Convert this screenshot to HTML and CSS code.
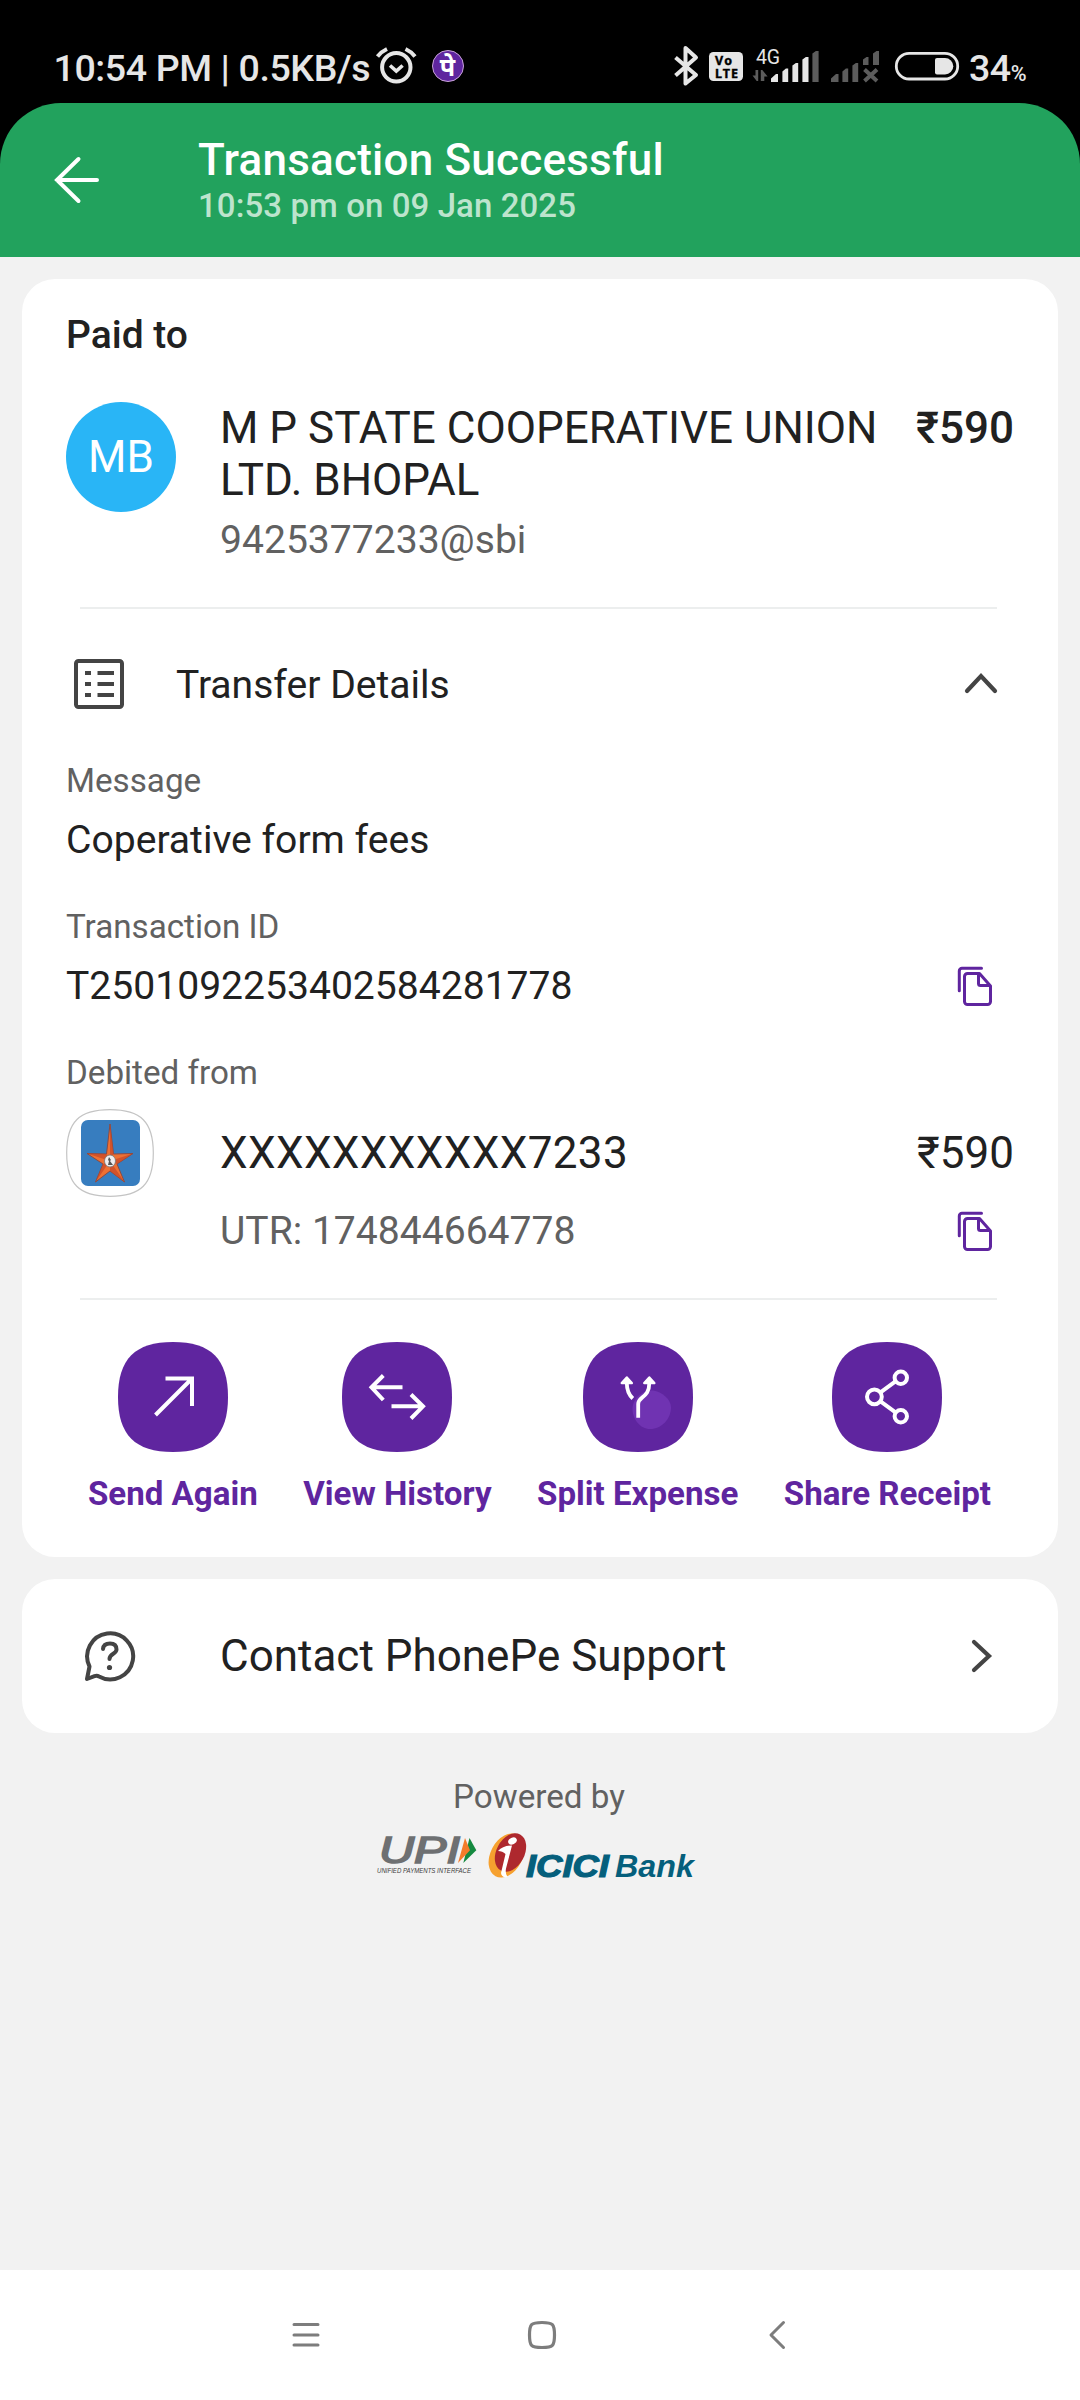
FILE: index.html
```html
<!DOCTYPE html>
<html lang="en">
<head>
<meta charset="utf-8">
<title>Transaction Successful</title>
<link rel="stylesheet" href="styles.css">
</head>
<body>
<div class="statusbar">
  <span class="clock">10:54 PM | 0.5KB/s</span>
  <svg class="alarm" width="42" height="38" viewBox="375 47 42 38" fill="none" stroke="#e6e6e6">
    <circle cx="396.3" cy="67.3" r="14.2" stroke-width="4"/>
    <path d="M390 65.5l6.3 5.5 6.3-5.5" stroke-width="3.6"/>
    <path d="M377.5 56.5q4-5 9.5-7.5M415 56.500q-4-5-9.500-7.500" stroke-width="4"/>
  </svg>
  <span class="pe">पे</span>
  <svg class="sys" width="290" height="42" viewBox="670 45 290 42">
    <path d="M675.500 57.500L696 75 685.500 83.500V48L696 57.500 675.500 75.500" fill="none" stroke="#e6e6e6" stroke-width="4" stroke-linejoin="round"/>
    <rect x="709" y="52" width="34" height="29" rx="4.500" fill="#e6e6e6"/>
    <text class="lte" x="715" y="64.500" textLength="17">Vo</text>
    <text class="lte" x="715" y="77.500" textLength="23">LTE</text>
    <text class="net" x="756" y="64" textLength="24">4G</text>
    <path d="M758.200 70v11h-1.500l-4.200-5.500h3V70zM760.800 81V70h1.500l5.300 6.500h-3.300V81z" fill="#5c5c5c"/>
    <path d="M771 82v-3.500l5-4.500h2v8zM782.400 82V71.500l3.500-3h2.300V82zM792.400 82V65.500l3.500-2.500h2.300v19zM802.400 82V59.500l3.500-2.500h2.600v25z" fill="#e6e6e6"/>
    <path d="M812.400 82V53.500l3.500-2.500h2.700v31zM831 82v-3.500l5-4.500h2.500v8zM842.400 82V71.500l3.500-3h2.300V82zM852.400 82V65.500l3.500-2.500h2.300v19zM863 65v-5.500l3.500-2.500h2v8zM873 65V53.500l3.500-2.500h2.500v14z" fill="#5c5c5c"/>
    <path d="M864.500 69.500l12.500 11.500M877 69.500l-12.500 11.500" stroke="#5c5c5c" stroke-width="4"/>
    <rect x="896.300" y="53.300" width="61.400" height="25.700" rx="12.850" fill="none" stroke="#e6e6e6" stroke-width="2.800"/>
    <path d="M937 58h8a8.200 8.200 0 0 1 0 16.500h-8a2 2 0 0 1-2-2V60a2 2 0 0 1 2-2z" fill="#e6e6e6"/>
  </svg>
  <span class="battery">34<small>%</small></span>
</div>
<header class="header">
  <svg class="back" width="46" height="50" viewBox="0 0 46 50" fill="none" stroke="#fff" stroke-width="4" stroke-linecap="round"><path d="M43 25H3M24.500 4L3 25l21.500 21"/></svg>
  <div>
    <h1 class="title">Transaction Successful</h1>
    <p class="when">10:53 pm on 09 Jan 2025</p>
  </div>
</header>
<main class="content">
  <section class="card receipt">
    <h2 class="paid">Paid to</h2>
    <div class="payee">
      <div class="avatar">MB</div>
      <div class="who">
        <p class="name">M P STATE COOPERATIVE UNION<br>LTD. BHOPAL</p>
        <p class="sub vpa">9425377233@sbi</p>
      </div>
      <p class="amount strong">₹590</p>
    </div>
    <hr class="rule">
    <div class="fold">
      <svg class="list" width="50" height="50" viewBox="0 0 50 50" fill="none" stroke="#444" stroke-width="4"><rect x="2" y="2" width="46" height="46" rx="2.500"/><path d="M11 14h6M23.500 14H40M11 25h6M23.500 25H40M11 36h6M23.500 36H40"/></svg>
      <span>Transfer Details</span>
      <svg class="up" width="34" height="22" viewBox="0 0 34 22" fill="none" stroke="#444" stroke-width="4.200" stroke-linecap="round"><path d="M3 19L17 4l14 15"/></svg>
    </div>
    <p class="label">Message</p>
    <p class="value">Coperative form fees</p>
    <p class="label">Transaction ID</p>
    <div class="value copyrow"><span>T2501092253402584281778</span>
      <svg class="copy" width="40" height="46" viewBox="954 963 40 46" fill="none" stroke="#5f259f" stroke-width="3" stroke-linecap="round" stroke-linejoin="round"><path d="M959.300 990.700V971a2.700 2.700 0 0 1 2.700-2.700h19.500M967.500 973.500h12l11 12.500v15.500a3 3 0 0 1-3 3h-20a3 3 0 0 1-3-3v-25a3 3 0 0 1 3-3zM978.500 974v9.500a2 2 0 0 0 2 2h9.500"/></svg>
    </div>
    <p class="label">Debited from</p>
    <div class="account">
      <svg class="bank" width="88" height="88" viewBox="0 0 88 88">
        <path d="M.7 44C.7 13 13 .7 44 .7S87.300 13 87.300 44 75 87.300 44 87.300.7 75 .7 44z" fill="#fff" stroke="#c4c4c4" stroke-width="1.200"/>
        <rect x="15" y="11" width="59" height="66" rx="7" fill="#377dbf"/>
        <path d="M44 15l3.500 30 19.500-.5-16 10.500 7.500 18L44 62 29.500 73 37 55 21 44.500l19.500.5z" fill="#ee7032" stroke="#8b4a43" stroke-width="1"/>
        <path d="M44 15v37l3.500-7zM67 44.500L44 52l7 3zM58.500 73L44 52v10zM29.500 73L44 52l-7 3zM21 44.500L44 52l-3.500-7z" fill="#c84a28" opacity=".75"/>
        <ellipse cx="44" cy="52" rx="5.500" ry="6" fill="#f0eeee" stroke="#777" stroke-width=".8"/>
        <path d="M43 48l2 3-1 1 3 4h-5l1-4-1-1z" fill="#555"/>
      </svg>
      <span class="number">XXXXXXXXXXX7233</span>
      <span class="amount">₹590</span>
    </div>
    <div class="utr copyrow"><span class="sub">UTR: 174844664778</span>
      <svg class="copy" width="40" height="46" viewBox="954 963 40 46" fill="none" stroke="#5f259f" stroke-width="3" stroke-linecap="round" stroke-linejoin="round"><path d="M959.300 990.700V971a2.700 2.700 0 0 1 2.700-2.700h19.500M967.500 973.500h12l11 12.500v15.500a3 3 0 0 1-3 3h-20a3 3 0 0 1-3-3v-25a3 3 0 0 1 3-3zM978.500 974v9.500a2 2 0 0 0 2 2h9.500"/></svg>
    </div>
    <hr class="rule">
    <div class="actions">
      <div class="action">
        <svg width="110" height="110" viewBox="0 0 110 110" fill="none" stroke="#fff" stroke-width="4"><path class="tile" d="M0 55C0 17 17 0 55 0S110 17 110 55 93 110 55 110 0 93 0 55z"/><path d="M37.500 73L74 36.500M47.500 36.500H74V64"/></svg>
        <span>Send Again</span>
      </div>
      <div class="action">
        <svg width="110" height="110" viewBox="0 0 110 110" fill="none" stroke="#fff" stroke-width="4"><path class="tile" d="M0 55C0 17 17 0 55 0S110 17 110 55 93 110 55 110 0 93 0 55z"/><path d="M60.500 45.300H30M41.300 33.500L29.500 45.300 41.300 58M49.500 64.300H80M69 52.500L81 64.300 69 76.500"/></svg>
        <span>View History</span>
      </div>
      <div class="action">
        <svg width="110" height="110" viewBox="0 0 110 110" fill="none" stroke="#fff" stroke-width="4"><path class="tile" d="M0 55C0 17 17 0 55 0S110 17 110 55 93 110 55 110 0 93 0 55z"/><path d="M70 48.500c9 1 18 9 18 17 0 11-9 21.500-21 21.500-10 0-17.500-10-17.500-20C49.500 56 60 47.500 70 48.500z" fill="#7033b2" stroke="none"/><path d="M43.800 41q0 10 6 15.500M66.300 41c0 15-11 13-11.100 21v13.700" stroke-width="3.800"/><path d="M43.800 35.500l5 5.500h-10zM66.300 35.500l5 5.500h-10z" fill="#fff" stroke-width="2.500" stroke-linejoin="round"/></svg>
        <span>Split Expense</span>
      </div>
      <div class="action">
        <svg width="110" height="110" viewBox="0 0 110 110" fill="none" stroke="#fff" stroke-width="4"><path class="tile" d="M0 55C0 17 17 0 55 0S110 17 110 55 93 110 55 110 0 93 0 55z"/><circle cx="42.400" cy="54.800" r="7.400"/><circle cx="68.800" cy="35.700" r="6.200"/><circle cx="68.800" cy="74.200" r="6.200"/><path d="M48.500 50.300l15-11M48.500 59.300l15 11"/></svg>
        <span>Share Receipt</span>
      </div>
    </div>
  </section>
  <section class="card support">
    <svg width="52" height="52" viewBox="84 1630 52 52" fill="none" stroke="#444" stroke-width="4" stroke-linecap="round" stroke-linejoin="round"><path d="M87 1679l2.500-12.500a23 23 0 1 1 9.500 10q-2-1.200-4.500-.3z"/><path d="M103 1649q.5-5.500 7-5.500t6.500 6c0 4.500-7 4-7 9.500"/><circle cx="109.500" cy="1667.500" r="2.600" fill="#444" stroke="none"/></svg>
    <span>Contact PhonePe Support</span>
    <svg class="next" width="24" height="38" viewBox="0 0 24 38" fill="none" stroke="#444" stroke-width="4.200" stroke-linecap="round"><path d="M4 5l15 14L4 33"/></svg>
  </section>
  <footer class="powered">
    <p>Powered by</p>
    <svg width="324" height="50" viewBox="376 1830 324 50">
      <text class="upi" x="380" y="1862" textLength="81" lengthAdjust="spacingAndGlyphs">UPI</text>
      <path d="M470.500 1837l6.800 12.300-13 12.700z" fill="#14893f"/>
      <path d="M466 1837l5 12.300-12 12.700z" fill="#f47b2a"/>
      <text class="tag" x="378" y="1871.500" textLength="94" lengthAdjust="spacingAndGlyphs">UNIFIED PAYMENTS INTERFACE</text>
      <ellipse cx="507.500" cy="1854.500" rx="16" ry="23.500" transform="rotate(28 507.500 1854.500)" fill="#f6a12f"/>
      <ellipse cx="511.500" cy="1851.500" rx="14" ry="20.500" transform="rotate(28 511.500 1851.500)" fill="#ae282e"/>
      <ellipse cx="513.500" cy="1840" rx="4.500" ry="3.200" transform="rotate(-25 513.500 1840)" fill="#fff"/>
      <path d="M499 1850q5-5.500 14-5.500l-6 23q-1 5 1.500 8.500-6 1-6.500-4l4.500-19q-3-3-7.500-3z" fill="#fff"/>
      <text class="icici" x="527" y="1875.500" textLength="83" lengthAdjust="spacingAndGlyphs">ICICI</text>
      <text class="bankname" x="616" y="1875.500" textLength="79" lengthAdjust="spacingAndGlyphs">Bank</text>
    </svg>
  </footer>
</main>
<nav class="nav">
  <svg width="30" height="30" viewBox="0 0 30 30" fill="none" stroke="#7d7d7d" stroke-width="3" stroke-linecap="round"><path d="M3 4.500h24M3 15h24M3 25h24"/></svg>
  <svg width="30" height="30" viewBox="0 0 30 30" fill="none" stroke="#7d7d7d" stroke-width="3.200"><path d="M2.500 15C2.500 4 4 2.500 15 2.500S27.500 4 27.500 15 26 27.500 15 27.500 2.500 26 2.500 15z"/></svg>
  <svg width="30" height="30" viewBox="0 0 30 30" fill="none" stroke="#7d7d7d" stroke-width="3" stroke-linecap="round" stroke-linejoin="round"><path d="M21.500 2.500L9 15l12.500 12.500"/></svg>
</nav>
</body>
</html>
```
FILE: styles.css
```css
* { box-sizing: border-box; margin: 0; padding: 0; }
body {
  width: 1080px;
  height: 2400px;
  display: flex;
  flex-direction: column;
  background: #000;
  font-family: Roboto, "Noto Sans", sans-serif;
  font-size: 39.1px;
  color: #212121;
  overflow: hidden;
}
svg { display: block; flex: none; }

.statusbar {
  height: 103px;
  padding: 44px 50px 0 53.5px;
  display: flex;
  align-items: flex-start;
  color: #e6e6e6;
}
.clock, .battery { font-weight: 500; font-size: 37.5px; line-height: 48px; white-space: nowrap; }
.clock { width: 318px; letter-spacing: -.38px; }
.alarm { margin: 3px 0 0 3px; }
.pe {
  width: 32px;
  height: 32px;
  margin: 6px 0 0 15px;
  border: 1px solid #c9a4d8;
  border-radius: 50%;
  background: #5f259f;
  color: #fff;
  font: bold 25px/31px "Noto Sans", sans-serif;
  text-align: center;
}
.sys { margin: 1px 0 0 auto; }
.lte { font: bold 12.5px "Noto Sans", sans-serif; fill: #000; stroke: #000; stroke-width: .4px; }
.net { font: 19.5px Roboto, sans-serif; fill: #e6e6e6; }
.battery { width: 61px; margin-left: 9px; letter-spacing: -.5px; }
.battery small { font-size: 21.5px; }

.header {
  height: 154px;
  padding: 30px 54px 0;
  display: flex;
  background: #22a25d;
  border-radius: 61px 61px 0 0;
  color: #fff;
}
.back { margin: 22px 98px 0 0; }
.title { font-size: 44px; font-weight: 500; line-height: 54px; letter-spacing: .22px; }
.when { font-size: 33px; font-weight: 500; line-height: 38px; letter-spacing: .08px; color: #bde4cd; }

.content {
  flex: 1;
  padding: 22px;
  display: flex;
  flex-direction: column;
  gap: 22px;
  background: #f2f2f2;
}
.card { background: #fff; border-radius: 33px; padding: 33px 44px; }
.receipt { height: 1278px; }
.paid { font-size: 39px; font-weight: 500; line-height: 46px; }
.payee { display: flex; margin-top: 44px; }
.avatar {
  width: 110px;
  height: 110px;
  margin-right: 44px;
  border-radius: 50%;
  background: #29b5f6;
  color: #fff;
  font-size: 44px;
  line-height: 110px;
  text-align: center;
}
.name { font-size: 44px; line-height: 52px; white-space: nowrap; }
.sub { color: #616161; line-height: 46px; }
.vpa { margin-top: 11px; }
.amount { margin-left: auto; font-size: 44px; line-height: 52px; }
.strong { font-weight: 500; }
.rule { height: 2px; margin: 44px 17px 0 14px; border: 0; background: #eceeee; }
.fold { display: flex; height: 52px; margin: 50px 16px 50px 8px; line-height: 52px; }
.fold span { margin-left: 52px; }
.up { margin: 13px 0 0 auto; }
.label { font-size: 33.2px; line-height: 40px; color: #616161; margin-bottom: 16px; }
.value { line-height: 46px; margin-bottom: 44px; }
.copyrow { display: flex; justify-content: space-between; padding-right: 20px; }
.copyrow .copy { margin-top: -.5px; }
.account { display: flex; align-items: center; height: 88px; font-size: 44px; }
.account .bank { margin-right: 66px; }
.number { letter-spacing: .38px; }
.utr { margin-top: 11px; padding-left: 154px; line-height: 46px; }
.actions {
  display: flex;
  justify-content: space-between;
  margin: 42px 23px 0 22px;
}
.action {
  display: flex;
  flex-direction: column;
  align-items: center;
  gap: 22px;
  font-size: 33.1px;
  line-height: 40px;
  font-weight: 700;
  color: #5f259f;
}
.tile { fill: #5f259f; stroke: none; }

.support {
  height: 154px;
  padding: 0 64px 0 62px;
  display: flex;
  align-items: center;
  font-size: 44px;
}
.support span { margin-left: 84px; }
.next { margin-left: auto; }

.powered {
  padding: 22px 2px 0 0;
  display: flex;
  flex-direction: column;
  align-items: center;
  gap: 14px;
  font-size: 33.2px;
  line-height: 40px;
  color: #616161;
}
.powered svg { margin-right: 4px; }
.upi { font: italic 500 36px "Liberation Sans", sans-serif; fill: #6e7072; stroke: #6e7072; stroke-width: 1.6px; }
.tag { font: italic 8px "Liberation Sans", sans-serif; fill: #3c3c3c; }
.icici { font: italic bold 31px "Liberation Sans", sans-serif; fill: #055f7c; stroke: #055f7c; stroke-width: 1.2px; }
.bankname { font: italic bold 31px "Liberation Sans", sans-serif; fill: #055f7c; }

.nav {
  height: 130px;
  padding: 0 288px 0 291px;
  display: flex;
  align-items: center;
  justify-content: space-between;
  background: #fff;
}
```
